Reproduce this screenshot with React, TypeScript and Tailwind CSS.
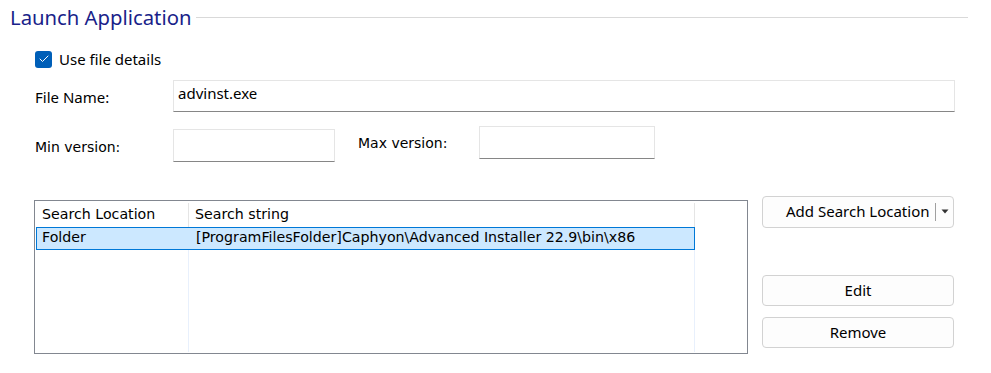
import { Check } from "lucide-react";

const ui = "font-['Noto_Sans',_'Open_Sans',_sans-serif]";
const shell = "font-['DejaVu_Sans',_'Liberation_Sans',_sans-serif]";

function TextBox({ value, className }: { value?: string; className: string }) {
  return (
    <div
      className={`flex items-center border border-[#e5e5e5] border-b-[#868686] bg-white px-[4px] text-[15px] text-black ${className}`}
    >
      {value}
    </div>
  );
}

function Button({ label, className }: { label: string; className?: string }) {
  return (
    <button
      className={`flex h-[31px] w-[192px] items-center justify-center rounded-[4px] border border-[#d2d2d2] bg-[#fdfdfd] text-[15px] text-black ${className ?? ""}`}
    >
      {label}
    </button>
  );
}

export default function App() {
  return (
    <div className={`flex h-[373px] w-[991px] flex-col bg-white ${ui}`}>
      <div className="flex h-[33px] items-center pl-[10px] pr-[23px] pt-[1px]">
        <span className="text-[20.3px] leading-none text-[#1a1f8a]">Launch Application</span>
        <span className="ml-[5px] h-px flex-1 bg-[#d9d9d9]" />
      </div>

      <div className="ml-[35px] mt-[15px] flex items-center gap-[7px]">
        <span className="flex h-[17px] w-[17px] items-center justify-center rounded-[3px] bg-[#005fb8]">
          <Check size={12} strokeWidth={2} className="text-white" />
        </span>
        <span className="text-[15px] text-black">Use file details</span>
      </div>

      <div className="ml-[35px] mt-[9px] flex items-center">
        <span className="w-[138px] pt-[4px] text-[15px] text-black">File Name:</span>
        <TextBox value="advinst.exe" className="h-[32px] w-[782px] pb-[4px]" />
      </div>

      <div className={`ml-[35px] mt-[14px] flex items-start text-[14px] text-black ${shell}`}>
        <span className="mt-[11px] w-[138px]">Min version:</span>
        <TextBox className="mt-[3px] h-[33px] w-[162px]" />
        <span className="ml-[23px] mt-[7px] w-[121px]">Max version:</span>
        <TextBox className="h-[33px] w-[176px]" />
      </div>

      <div className="ml-[34px] mt-[34px] flex items-start">
        <div className={`mt-[4px] flex h-[154px] w-[714px] flex-col border border-[#828790] bg-white text-[14.2px] text-black ${shell}`}>
          <div className="flex h-[26px] pt-[2px]">
            <div className="flex w-[154px] items-center border-r border-[#e5e5e5] pl-[7px]">Search Location</div>
            <div className="flex w-[506px] items-center border-r border-[#e5e5e5] pl-[6px]">Search string</div>
          </div>
          <div className="flex h-[23px]">
            <div className="ml-[1px] flex w-[659px] items-center border border-[#0078d7] bg-[#cce8ff]">
              <span className="w-[152px] pl-[5px]">Folder</span>
              <span className="pl-[7px]">[ProgramFilesFolder]Caphyon\Advanced Installer 22.9\bin\x86</span>
            </div>
          </div>
          <div className="flex flex-1 pb-[1px]">
            <div className="w-[154px] border-r border-[#e8f0fc]" />
            <div className="w-[506px] border-r border-[#e8f0fc]" />
          </div>
        </div>

        <div className="ml-[14px] flex flex-col">
          <button className="flex h-[32px] w-[192px] items-center rounded-[4px] border border-[#d2d2d2] bg-[#fdfdfd] text-[15px] text-black">
            <span className="ml-[23px]">Add Search Location</span>
            <span className="ml-[5px] h-[18px] w-px bg-[#a0a0a0]" />
            <svg width="8" height="5" viewBox="0 0 8 5" className="ml-[5px]">
              <path d="M0.5 0.5h7L4 4.5z" fill="#333" />
            </svg>
          </button>
          <Button label="Edit" className="mt-[47px]" />
          <Button label="Remove" className="mt-[11px]" />
        </div>
      </div>
    </div>
  );
}
